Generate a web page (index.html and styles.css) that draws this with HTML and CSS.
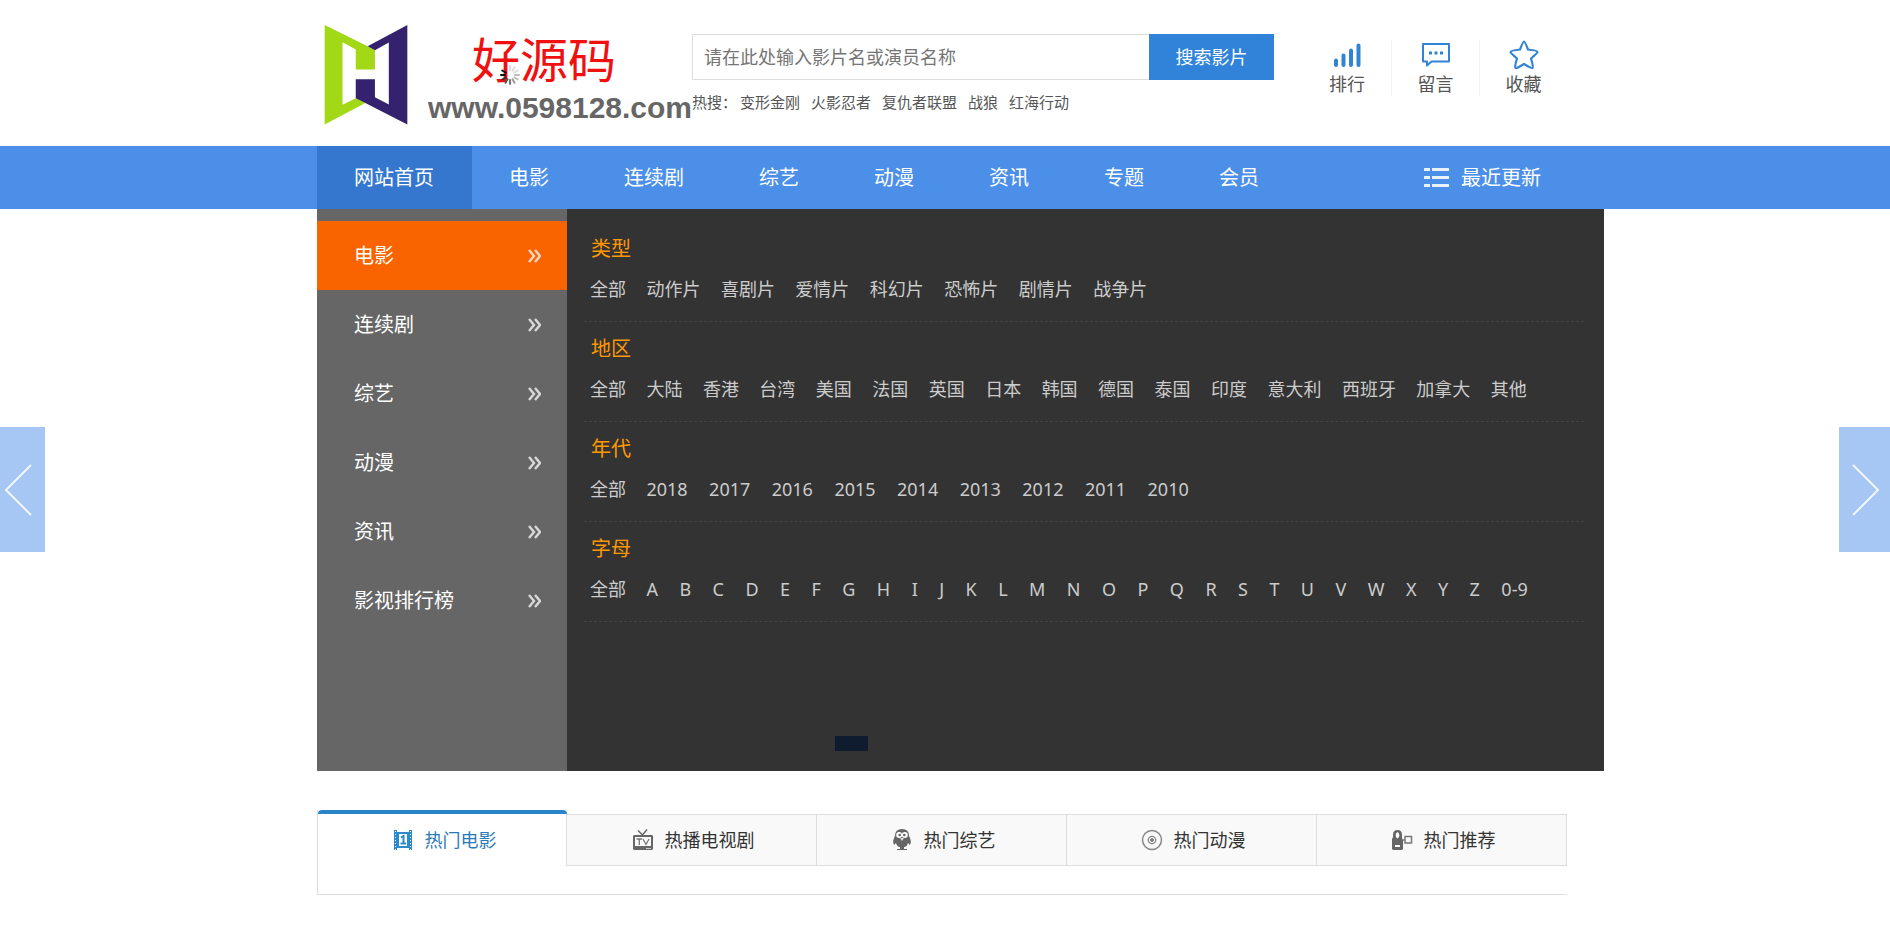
FILE: index.html
```html
<!DOCTYPE html>
<html lang="zh-CN">
<head>
<meta charset="utf-8">
<title>影视网站首页</title>
<link rel="stylesheet" href="styles.css">
</head>
<body>
<header class="container header">
  <a class="brand" href="#">
    <svg class="brand-mark" viewBox="42 42 254 306" aria-hidden="true">
      <path fill="#a3d817" d="M44 44 174 108 196 120V178H138V118L98 96V285L138 265 167 280 44 345Z"/>
      <path fill="#35226e" d="M294 44 174 108 196 120 238 97V284L196 262V208H138V265L167 280 294 345Z"/>
    </svg>
    <span class="brand-text">
      <span class="brand-name">好源码
        <svg class="spinner" viewBox="-10 -10 20 20" aria-hidden="true" stroke-width="2" stroke-linecap="round">
          <path stroke="#111" d="M-5 0H-9M-4.300-2.500-7.800-4.500"/>
          <path stroke="#333" d="M-4.300 2.500-7.800 4.500"/>
          <path stroke="#555" d="M-2.500 4.300-4.500 7.800"/>
          <path stroke="#777" d="M0 5V9"/>
          <path stroke="#999" d="M2.500 4.300 4.500 7.800"/>
          <path stroke="#bbb" d="M4.300 2.500 7.800 4.500M5 0H9"/>
          <path stroke="#ddd" d="M4.300-2.500 7.800-4.500M2.500-4.300 4.500-7.800M0-5V-9"/>
        </svg>
      </span>
      <span class="brand-url">www.0598128.com</span>
    </span>
  </a>
  <div class="search">
    <form class="search-form">
      <input class="search-input" type="text" aria-label="搜索" placeholder="请在此处输入影片名或演员名称">
      <button class="search-button" type="button">搜索影片</button>
    </form>
    <div class="hot">
      <span class="hot-label">热搜：</span>
      <a href="#">变形金刚</a><a href="#">火影忍者</a><a href="#">复仇者联盟</a><a href="#">战狼</a><a href="#">红海行动</a>
    </div>
  </div>
  <div class="quick">
    <a class="quick-item" href="#">
      <svg viewBox="0 0 30 30" aria-hidden="true" stroke="#3183d3" stroke-width="4" stroke-linecap="round"><path d="M4 20.500V25M11.500 15.500V25M19 10.500V25M26.500 5.500V25"/></svg>
      排行
    </a>
    <a class="quick-item" href="#">
      <svg viewBox="0 0 30 30" aria-hidden="true" fill="none" stroke="#3183d3" stroke-width="2" stroke-linejoin="round"><path d="M2 4H28V21.500H10.500L6 25.500V21.500H2Z"/><path d="M8 13H11M13.500 13H16.500M19 13H22" stroke-width="3"/></svg>
      留言
    </a>
    <a class="quick-item" href="#">
      <svg viewBox="0 0 30 30" aria-hidden="true" fill="none" stroke="#3183d3" stroke-width="2.200" stroke-linejoin="round"><path d="M15 1.500Q16 1.500 19 9.500 28.500 10.500 28.500 12 28.500 13 22 18.500 24.500 27 23.500 28 22.500 28.800 15 24 7.500 28.800 6.500 28 5.500 27 8 18.500 1.500 13 1.500 12 1.500 10.500 11 9.500 14 1.500 15 1.500Z"/></svg>
      收藏
    </a>
  </div>
</header>

<nav class="nav">
  <div class="container nav-inner">
    <a class="nav-link nav-link-active" href="#">网站首页</a>
    <a class="nav-link" href="#">电影</a>
    <a class="nav-link" href="#">连续剧</a>
    <a class="nav-link" href="#">综艺</a>
    <a class="nav-link" href="#">动漫</a>
    <a class="nav-link" href="#">资讯</a>
    <a class="nav-link" href="#">专题</a>
    <a class="nav-link" href="#">会员</a>
    <a class="nav-recent" href="#">
      <svg viewBox="0 0 25 19" aria-hidden="true" fill="#e8f1fd"><path d="M0 0H6V3H0ZM8 0H25V3H8ZM0 8H6V11H0ZM8 8H25V11H8ZM0 16H6V19H0ZM8 16H25V19H8Z"/></svg>
      最近更新
    </a>
  </div>
</nav>

<main>
  <section class="container">
    <div class="hero">
      <div class="side">
        <a class="side-link side-link-active" href="#">电影<svg viewBox="0 0 13 14" aria-hidden="true"><path d="M1 1 6 7 1 13M7 1 12 7 7 13"/></svg></a>
        <a class="side-link" href="#">连续剧<svg viewBox="0 0 13 14" aria-hidden="true"><path d="M1 1 6 7 1 13M7 1 12 7 7 13"/></svg></a>
        <a class="side-link" href="#">综艺<svg viewBox="0 0 13 14" aria-hidden="true"><path d="M1 1 6 7 1 13M7 1 12 7 7 13"/></svg></a>
        <a class="side-link" href="#">动漫<svg viewBox="0 0 13 14" aria-hidden="true"><path d="M1 1 6 7 1 13M7 1 12 7 7 13"/></svg></a>
        <a class="side-link" href="#">资讯<svg viewBox="0 0 13 14" aria-hidden="true"><path d="M1 1 6 7 1 13M7 1 12 7 7 13"/></svg></a>
        <a class="side-link" href="#">影视排行榜<svg viewBox="0 0 13 14" aria-hidden="true"><path d="M1 1 6 7 1 13M7 1 12 7 7 13"/></svg></a>
      </div>
      <div class="filters">
        <div class="filter">
          <h2 class="filter-title">类型</h2>
          <div class="filter-links">
            <a href="#">全部</a> <a href="#">动作片</a> <a href="#">喜剧片</a> <a href="#">爱情片</a> <a href="#">科幻片</a> <a href="#">恐怖片</a> <a href="#">剧情片</a> <a href="#">战争片</a>
          </div>
        </div>
        <div class="filter">
          <h2 class="filter-title">地区</h2>
          <div class="filter-links">
            <a href="#">全部</a> <a href="#">大陆</a> <a href="#">香港</a> <a href="#">台湾</a> <a href="#">美国</a> <a href="#">法国</a> <a href="#">英国</a> <a href="#">日本</a> <a href="#">韩国</a> <a href="#">德国</a> <a href="#">泰国</a> <a href="#">印度</a> <a href="#">意大利</a> <a href="#">西班牙</a> <a href="#">加拿大</a> <a href="#">其他</a>
          </div>
        </div>
        <div class="filter">
          <h2 class="filter-title">年代</h2>
          <div class="filter-links filter-links-latin">
            <a href="#">全部</a> <a href="#">2018</a> <a href="#">2017</a> <a href="#">2016</a> <a href="#">2015</a> <a href="#">2014</a> <a href="#">2013</a> <a href="#">2012</a> <a href="#">2011</a> <a href="#">2010</a>
          </div>
        </div>
        <div class="filter">
          <h2 class="filter-title">字母</h2>
          <div class="filter-links filter-links-latin">
            <a href="#">全部</a> <a href="#">A</a> <a href="#">B</a> <a href="#">C</a> <a href="#">D</a> <a href="#">E</a> <a href="#">F</a> <a href="#">G</a> <a href="#">H</a> <a href="#">I</a> <a href="#">J</a> <a href="#">K</a> <a href="#">L</a> <a href="#">M</a> <a href="#">N</a> <a href="#">O</a> <a href="#">P</a> <a href="#">Q</a> <a href="#">R</a> <a href="#">S</a> <a href="#">T</a> <a href="#">U</a> <a href="#">V</a> <a href="#">W</a> <a href="#">X</a> <a href="#">Y</a> <a href="#">Z</a> <a href="#">0-9</a>
          </div>
        </div>
        <span class="slide-dot"></span>
      </div>
    </div>
  </section>

  <section class="container">
    <div class="hot-panel">
      <div class="tabs">
        <a class="tab tab-active" href="#">
          <svg class="tab-icon" viewBox="0 0 22 22" aria-hidden="true"><path fill="#2a8acb" d="M2 1H5V3H17V1H20V21H17V19H5V21H2Z"/><path fill="#fff" d="M7 5H15V17H7Z"/><path stroke="#fff" stroke-dasharray="1 2" d="M3.500 2V21M18.500 2V21"/><path fill="none" stroke="#2a8acb" stroke-width="2" d="M9 8.500 11.500 7V14M8.500 14.500H14"/></svg>
          热门电影
        </a>
        <a class="tab" href="#">
          <svg class="tab-icon" viewBox="0 0 22 22" aria-hidden="true"><path fill="none" stroke="#666" stroke-width="1.500" d="M6 1.500 10.500 6 15 .5"/><path fill="#666" fill-rule="evenodd" d="M2 6H20L21 7V20L20 21H2L1 20V7ZM3 8V17H19V8Z"/><path fill="none" stroke="#777" stroke-width="1.300" d="M4.500 10H10M7.300 10V16M11 10 14 15.500 17 10"/><path stroke="#ccc" d="M14 19.500H19"/></svg>
          热播电视剧
        </a>
        <a class="tab" href="#">
          <svg class="tab-icon" viewBox="0 0 22 22" aria-hidden="true"><path fill="#666" d="M11 0Q18 0 18 7 21 12 19 16L17 14Q16 18 13 18V20H16V21H6V20H9V18Q6 18 5 14L3 16Q1 12 4 7 4 0 11 0Z"/><circle cx="8.200" cy="6" r="3" fill="#fff"/><circle cx="13.800" cy="6" r="3" fill="#fff"/><circle cx="8.700" cy="6" r="1.300" fill="#666"/><circle cx="13.300" cy="6" r="1.300" fill="#666"/><path fill="#ddd" d="M9 9H13L11 12Z"/></svg>
          热门综艺
        </a>
        <a class="tab" href="#">
          <svg class="tab-icon" viewBox="0 0 22 22" aria-hidden="true" fill="none" stroke="#888"><circle cx="11" cy="11" r="9.500" stroke-width="1.500"/><circle cx="11" cy="11" r="3.700" stroke-width="1.300"/><circle cx="11" cy="11" r="1.500" fill="#777"/></svg>
          热门动漫
        </a>
        <a class="tab" href="#">
          <svg class="tab-icon" viewBox="0 0 22 22" aria-hidden="true"><path fill="#666" fill-rule="evenodd" d="M2 6Q2 1 6.500 1T11 6V9L12 11V20L11 21H2L1 20V10L2 8ZM6.500 3A3 3.500 0 0 0 6.500 9.500 3 3.500 0 0 0 6.500 3ZM4 16V18H9V16Z"/><path fill="none" stroke="#777" stroke-width="1.500" d="M14 7.500H20.500V14H14ZM12 11H14"/></svg>
          热门推荐
        </a>
      </div>
    </div>
  </section>
</main>

<button class="slide-arrow slide-prev" type="button" aria-label="上一张">
  <svg viewBox="0 0 29 54" aria-hidden="true"><path d="M27 2 2 27 27 52"/></svg>
</button>
<button class="slide-arrow slide-next" type="button" aria-label="下一张">
  <svg viewBox="0 0 29 54" aria-hidden="true"><path d="M2 2 27 27 2 52"/></svg>
</button>
</body>
</html>
```
FILE: styles.css
```css
* {
  box-sizing: border-box;
}

body {
  margin: 0;
  background: #fff;
  color: #333;
  font-family: "Noto Sans", "Noto Sans CJK SC", sans-serif;
  font-size: 18px;
  line-height: 24px;
}

a {
  color: inherit;
  text-decoration: none;
}

svg {
  display: block;
  flex: none;
}

.container {
  max-width: 1256px;
  margin: 0 auto;
}

/* header */
.header {
  display: flex;
  align-items: flex-start;
  height: 146px;
  padding-right: 6px;
}

.brand {
  display: flex;
  flex: none;
  gap: 20px;
  width: 375px;
  padding: 24px 0 0 7px;
}

.brand-mark {
  width: 84px;
  height: 102px;
}

.brand-text {
  display: flex;
  flex-direction: column;
  white-space: nowrap;
}

.brand-name {
  position: relative;
  align-self: flex-start;
  margin-left: 44px;
  padding-top: 5px;
  color: #f01010;
  font-family: "Noto Sans CJK SC", sans-serif;
  font-size: 48px;
  line-height: 56px;
}

.spinner {
  position: absolute;
  top: 41px;
  left: 28px;
  width: 20px;
  height: 20px;
}

.brand-url {
  padding-top: 7px;
  color: #666;
  font-family: "Liberation Sans", sans-serif;
  font-size: 30px;
  font-weight: 700;
  line-height: 32px;
}

.search {
  flex: 1;
  max-width: 582px;
  padding-top: 34px;
}

.search-form {
  display: flex;
  height: 46px;
}

.search-input {
  flex: 1;
  min-width: 0;
  padding: 0 11px;
  border: 1px solid #ddd;
  border-right: 0;
  border-radius: 0;
  outline: 0;
  font: inherit;
}

.search-input::placeholder {
  color: #757575;
}

.search-button {
  width: 125px;
  padding: 0;
  border: 0;
  background: #3083d9;
  color: #fff;
  font: inherit;
  cursor: pointer;
}

.hot {
  display: flex;
  gap: 11px;
  padding-top: 10px;
  color: #555;
  font-size: 15px;
}

.hot-label {
  margin-right: -8px;
}

.quick {
  display: flex;
  margin-left: auto;
  padding-top: 40px;
}

.quick-item {
  display: flex;
  flex-direction: column;
  align-items: center;
  gap: 2px;
  width: 88px;
  color: #555;
}

.quick-item + .quick-item {
  border-left: 1px solid #f1f1f1;
}

.quick-item svg {
  width: 30px;
  height: 30px;
}

/* main navigation */
.nav {
  background: #4c8fe8;
  color: #fff;
  font-size: 20px;
  line-height: 63px;
}

.nav-inner {
  display: flex;
  padding-right: 32px;
}

.nav-link {
  padding: 0 38px 0 37px;
}

.nav-link-active {
  background: #3577cf;
}

.nav-recent {
  display: flex;
  align-items: center;
  gap: 12px;
  margin-left: auto;
}

.nav-recent svg {
  width: 25px;
  height: 19px;
}

/* category menu */
.hero {
  display: flex;
  min-height: 562px;
  margin-right: -31px;
}

.side {
  flex: none;
  width: 250px;
  padding-top: 12px;
  background: #666;
  color: #fff;
  font-size: 20px;
}

.side-link {
  display: flex;
  align-items: center;
  justify-content: space-between;
  height: 69px;
  padding: 0 26px 0 37px;
}

.side-link svg {
  width: 13px;
  height: 14px;
  fill: none;
  stroke: #fff;
  stroke-opacity: .75;
  stroke-width: 2.4;
}

.side-link-active {
  background: #fa6400;
}

.filters {
  position: relative;
  flex: 1;
  padding: 13px 20px 0 17px;
  background: #333;
}

.filter {
  height: 100px;
  padding-top: 15px;
  border-bottom: 1px dashed #444;
}

.filter-title {
  margin: 0;
  padding-left: 7px;
  color: #f90;
  font-size: 20px;
  font-weight: 400;
  line-height: 24px;
}

.filter-links {
  padding-top: 16px;
  margin-left: -2px;
  color: #ccc;
  font-family: "Liberation Sans", sans-serif;
  font-size: 16px;
  white-space: nowrap;
}

.filter-links a {
  padding: 0 8px;
  font-family: "Noto Sans", "Noto Sans CJK SC", sans-serif;
  font-size: 18px;
}

.filter-links-latin a + a {
  padding-right: 9px;
}

.slide-dot {
  position: absolute;
  bottom: 20px;
  left: 268px;
  width: 33px;
  height: 15px;
  background: #0f1c30;
}

/* hot tabs */
.hot-panel {
  height: 85px;
  margin: 39px 6px 0 0;
  border-bottom: 1px solid #ddd;
  border-left: 1px solid #ddd;
}

.tabs {
  display: flex;
  align-items: flex-end;
  height: 56px;
}

.tab {
  display: flex;
  flex: 1;
  align-items: center;
  justify-content: center;
  gap: 11px;
  height: 52px;
  padding-left: 3px;
  border: 1px solid #ddd;
  border-left: 0;
  background: #f9f9f9;
}

.tab-active {
  height: 56px;
  padding-bottom: 1px;
  border-width: 4px 0 0;
  border-color: #2a85c8;
  border-radius: 4px 4px 0 0;
  box-shadow: inset -1px 0 #ddd;
  background: #fff;
  color: #2a7ab8;
}

.tab-icon {
  width: 22px;
  height: 22px;
}

/* slider arrows */
.slide-arrow {
  position: fixed;
  top: 427px;
  display: flex;
  align-items: center;
  height: 125px;
  border: 0;
  background: #a6c6f3;
  cursor: pointer;
}

.slide-arrow svg {
  width: 29px;
  height: 54px;
  fill: none;
  stroke: #f2f7fe;
  stroke-width: 2;
}

.slide-prev {
  left: 0;
  width: 45px;
  padding: 0 0 0 4px;
}

.slide-next {
  right: 0;
  width: 51px;
  padding: 0 0 0 12px;
}
```
